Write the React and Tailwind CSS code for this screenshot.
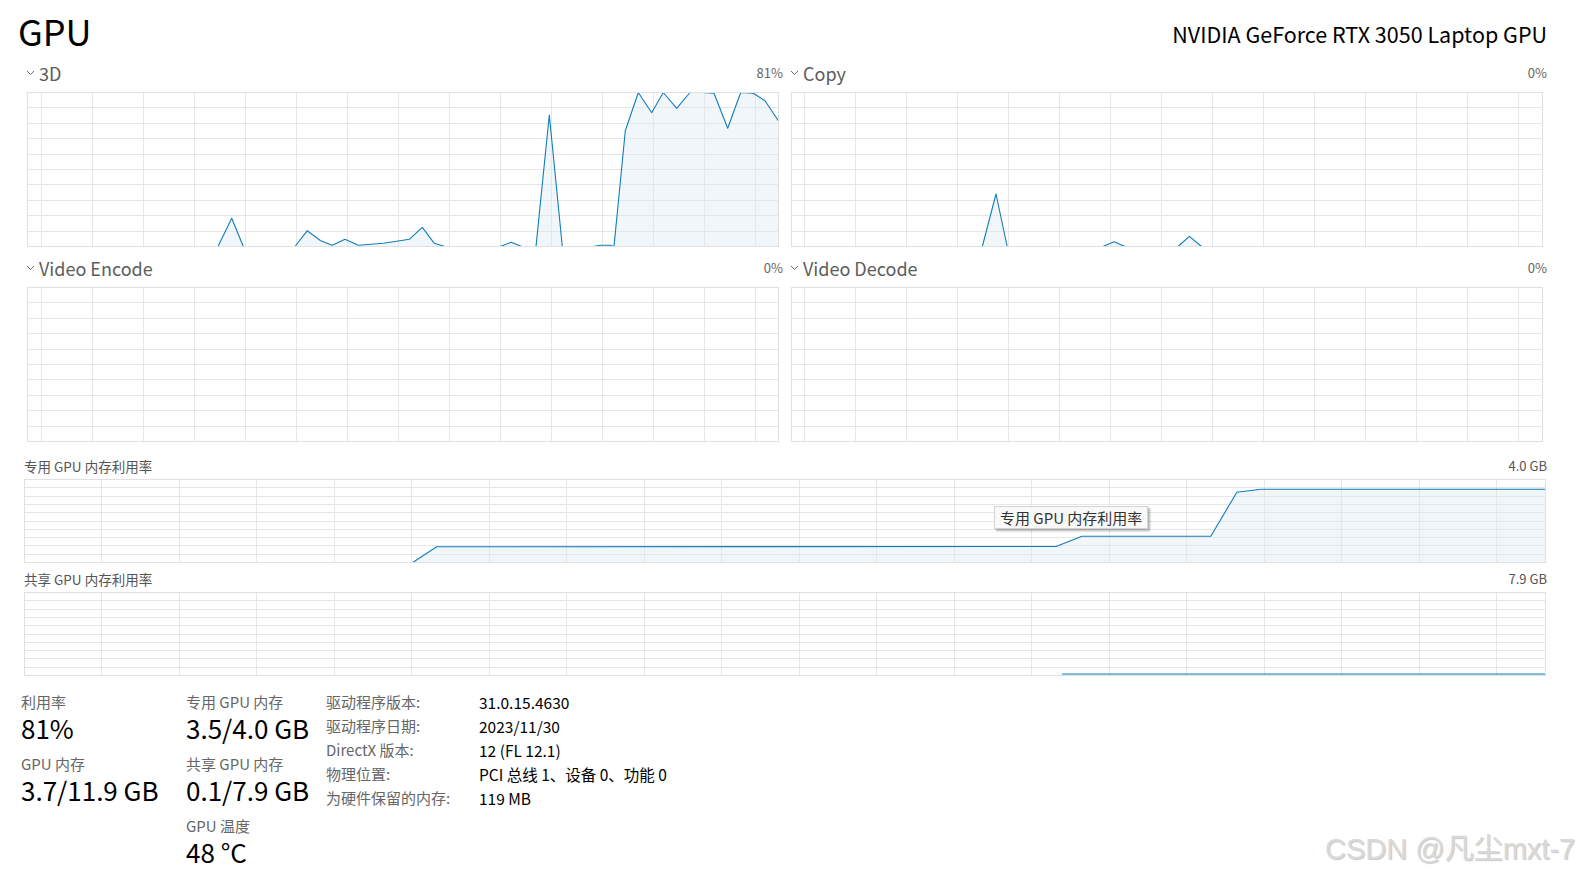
import React from 'react';

const Z = 154.5;

const d3 = [
  [0, Z], [191, Z], [204.7, 126.3], [216.3, Z], [268, Z], [280.3, 138.7], [293.7, 148.7],
  [305.3, 153.3], [318, 147.3], [331.3, 153.3], [356.3, 151.3], [369.7, 149.3], [382.3, 147.3],
  [395.3, 135.3], [407.3, 151.3], [418, Z], [473, Z], [484.3, 150.3], [494.7, Z], [509, Z],
  [522.3, 23], [535.3, Z], [566, Z], [573, 153.2], [583, 153.3], [587, Z], [598.3, 38.7],
  [611.3, 0.5], [624.7, 20.7], [636.3, 0.5], [649.7, 16.3], [663, 0.5], [675.3, 0.5], [687, 1.3],
  [700.7, 36.3], [713.7, 0.5], [726.3, 1.3], [738, 8.7], [752, 29.7],
];

const copy = [
  [0, Z], [191.3, Z], [205, 102], [216.2, Z], [311.8, Z], [323, 149.7], [334, Z],
  [387, Z], [398.4, 144.3], [410.6, Z], [752, Z],
];

const flat = [[0, Z], [752, Z]];

const dedicated = [
  [388.7, 83.5], [412.7, 67.7], [1032, 67.5], [1058, 57.3], [1186.8, 57.3], [1212.8, 13.3],
  [1237, 10.3], [1522, 10.3],
];

const shared = [[1038, 82], [1522, 82]];

function Chevron() {
  return (
    <svg width="9" height="6" viewBox="0 0 9 6" className="shrink-0">
      <path d="M1 1l3.5 3.5L8 1" fill="none" stroke="#6b6b6b" strokeWidth="1" />
    </svg>
  );
}

function Chart({ width, height, step, offset, points }) {
  const vx = [];
  for (let x = offset; x < width - 2; x += step) vx.push(Math.round(x) + 0.5);
  const hy = [];
  for (let i = 1; i < 10; i++) hy.push(Math.round((i * (height - 1)) / 10) + 0.5);
  const pts = points.map(([x, y]) => `${x},${y}`).join(' ');
  const first = points[0];
  const last = points[points.length - 1];
  const area = `${first[0]},${height - 1} ${pts} ${last[0]},${height - 1}`;

  return (
    <svg width={width} height={height} className="block">
      <polygon points={area} fill="#f1f6fa" />
      <g stroke="#e6e6e6" strokeWidth="1" shapeRendering="crispEdges">
        {vx.map((x) => (
          <line key={'v' + x} x1={x} y1={0} x2={x} y2={height} />
        ))}
        {hy.map((y) => (
          <line key={'h' + y} x1={0} y1={y} x2={width} y2={y} />
        ))}
      </g>
      <polyline points={pts} fill="none" stroke="#117dbb" strokeWidth="1.1" strokeLinejoin="round" />
      <rect x="0.5" y="0.5" width={width - 1} height={height - 1} fill="none" stroke="#e0e0e0" shapeRendering="crispEdges" />
    </svg>
  );
}

function EngineGraph({ name, pct, offset, points }) {
  return (
    <div className="w-[752px]">
      <div className="h-[40px] flex items-center justify-between">
        <div className="flex items-center gap-[4px] -ml-[1px] mt-[1px] text-[18px] leading-[20px] text-[#5c5c5c]">
          <Chevron />
          <span>{name}</span>
        </div>
        <span className="-mr-[4px] mt-[2px] text-[13px] leading-[16px] text-[#666]">{pct}</span>
      </div>
      <Chart width={752} height={155} step={51} offset={offset} points={points} />
    </div>
  );
}

function MemGraph({ label, max, points, children }) {
  return (
    <div>
      <div className="h-[26px] flex items-center justify-between text-[13.5px] leading-[16px] text-[#555]">
        <span>{label}</span>
        <span className="-mr-[1px] text-[13px]">{max}</span>
      </div>
      <div className="relative">
        <Chart width={1522} height={84} step={77.5} offset={77} points={points} />
        {children}
      </div>
    </div>
  );
}

function Stat({ label, value }) {
  return (
    <div className="mb-[10px]">
      <div className="h-[20px] text-[15px] leading-[20px] text-[#666]">{label}</div>
      <div className="h-[32px] text-[26px] leading-[32px] text-black">{value}</div>
    </div>
  );
}

const details = [
  ['驱动程序版本:', '31.0.15.4630'],
  ['驱动程序日期:', '2023/11/30'],
  ['DirectX 版本:', '12 (FL 12.1)'],
  ['物理位置:', 'PCI 总线 1、设备 0、功能 0'],
  ['为硬件保留的内存:', '119 MB'],
];

export default function App() {
  return (
    <div className="w-[1577px] h-[876px] bg-white relative overflow-hidden font-['Noto_Sans_CJK_SC',sans-serif]">
      <header className="h-[52px] flex justify-between items-start pl-[18px] pr-[30px]">
        <h1 className="mt-[10px] text-[36px] leading-[40px] font-normal text-black">GPU</h1>
        <div className="mt-[23px] text-[21.5px] leading-[22px] text-black">NVIDIA GeForce RTX 3050 Laptop GPU</div>
      </header>

      <div className="pl-[27px]">
        <div className="flex gap-[12px]">
          <EngineGraph name="3D" pct="81%" offset={13.5} points={d3} />
          <EngineGraph name="Copy" pct="0%" offset={12.5} points={copy} />
        </div>
        <div className="flex gap-[12px]">
          <EngineGraph name="Video Encode" pct="0%" offset={13.5} points={flat} />
          <EngineGraph name="Video Decode" pct="0%" offset={12.5} points={flat} />
        </div>
      </div>

      <div className="pl-[24px] mt-[11px] w-[1546px]">
        <MemGraph label="专用 GPU 内存利用率" max="4.0 GB" points={dedicated}>
          <div className="absolute left-[970px] top-[27px] h-[23px] px-[5px] flex items-center border border-[#d4d4d4] bg-[#f9f9f9] text-[15px] leading-[18px] text-[#333] shadow-[2px_2px_2px_rgba(0,0,0,0.3)]">
            专用 GPU 内存利用率
          </div>
        </MemGraph>
        <div className="mt-[3px]">
          <MemGraph label="共享 GPU 内存利用率" max="7.9 GB" points={shared} />
        </div>
      </div>

      <div className="mt-[14px] flex items-start pl-[21px]">
        <div className="w-[165px] pt-[2px]">
          <Stat label="利用率" value="81%" />
          <Stat label="GPU 内存" value="3.7/11.9 GB" />
        </div>
        <div className="w-[140px] pt-[2px]">
          <Stat label="专用 GPU 内存" value="3.5/4.0 GB" />
          <Stat label="共享 GPU 内存" value="0.1/7.9 GB" />
          <Stat label="GPU 温度" value="48 °C" />
        </div>
        <div className="grid grid-cols-[153px_auto] content-start text-[15px] leading-[24px]">
          {details.map(([k, v]) => (
            <React.Fragment key={k}>
              <div className="h-[24px] text-[#666]">{k}</div>
              <div className="h-[24px] text-[15.5px] text-black">{v}</div>
            </React.Fragment>
          ))}
        </div>
      </div>

      <div className="absolute left-[1325px] top-[832px] text-[29px] leading-[34px] font-['Liberation_Sans','Noto_Sans_CJK_SC',sans-serif] text-[#d9d9d9] [text-shadow:1px_1px_1px_rgba(0,0,0,0.22)]">
        CSDN @凡尘mxt-7
      </div>
    </div>
  );
}
